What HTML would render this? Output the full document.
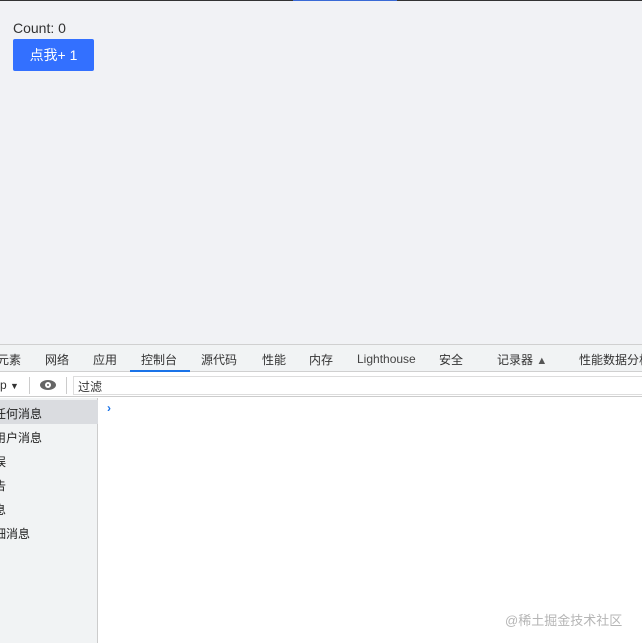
<!DOCTYPE html>
<html><head><meta charset="utf-8"><style>
*{margin:0;padding:0;box-sizing:border-box}
body{width:642px;height:643px;overflow:hidden;background:#f1f2f5;font-family:"Liberation Sans","Noto Sans CJK SC",sans-serif;position:relative}
.a{position:absolute}
.tab{position:absolute;top:351px;font-size:12px;color:#333;white-space:nowrap}
.side{position:absolute;left:0;font-size:12px;color:#222}
</style></head><body>
<div class="a" style="left:0;top:0;width:642px;height:1px;background:#333"></div>
<div class="a" style="left:293px;top:0;width:104px;height:1px;background:#3a6ad6"></div>
<div class="a" style="left:13px;top:20px;font-size:14px;color:#333">Count: 0</div>
<div class="a" style="left:13px;top:39px;width:81px;height:32px;background:#3370ff;border-radius:2px;color:#fff;font-size:14px;text-align:center;line-height:32px">点我+ 1</div>

<div class="a" style="left:0;top:344px;width:642px;height:299px;background:#fff"></div>
<div class="a" style="left:0;top:344px;width:642px;height:28px;background:#f1f3f4;border-top:1px solid #d0d0d0;border-bottom:1px solid #d0d0d0"></div>
<div class="tab" style="left:-3px">元素</div>
<div class="tab" style="left:45px">网络</div>
<div class="tab" style="left:93px">应用</div>
<div class="tab" style="left:141px">控制台</div>
<div class="a" style="left:130px;top:370px;width:60px;height:2px;background:#1a73e8"></div>
<div class="tab" style="left:201px">源代码</div>
<div class="tab" style="left:262px">性能</div>
<div class="tab" style="left:309px">内存</div>
<div class="tab" style="left:357px;top:352px;color:#444">Lighthouse</div>
<div class="tab" style="left:439px">安全</div>
<div class="tab" style="left:497px">记录器 <span style="font-size:11px;color:#555">▲</span></div>
<div class="tab" style="left:579px">性能数据分析</div>

<div class="a" style="left:0;top:373px;width:642px;height:24px;background:#fff;border-bottom:1px solid #ccc"></div>
<div class="a" style="left:0;top:378px;font-size:12px;color:#333">p <span style="font-size:9px">▼</span></div>
<div class="a" style="left:29px;top:377px;width:1px;height:17px;background:#ccc"></div>
<div class="a" style="left:40px;top:380px;width:16px;height:10px;border-radius:50%;background:#666"></div>
<div class="a" style="left:45px;top:382px;width:6px;height:6px;border-radius:50%;background:#fff"></div>
<div class="a" style="left:47px;top:384px;width:2px;height:2px;border-radius:50%;background:#666"></div>
<div class="a" style="left:66px;top:377px;width:1px;height:17px;background:#ccc"></div>
<div class="a" style="left:73px;top:376px;width:569px;height:19px;border:1px solid #ddd;border-right:none;background:#fff"></div>
<div class="a" style="left:78px;top:378px;font-size:12px;color:#333">过滤</div>

<div class="a" style="left:0;top:398px;width:98px;height:245px;background:#f1f3f4;border-right:1px solid #ccc"></div>
<div class="a" style="left:0;top:400px;width:98px;height:24px;background:#dadce0"></div>
<div class="side" style="left:-6px;top:405px">任何消息</div>
<div class="side" style="left:-6px;top:429px">用户消息</div>
<div class="side" style="left:-6px;top:453px">误</div>
<div class="side" style="left:-6px;top:477px">告</div>
<div class="side" style="left:-6px;top:501px">息</div>
<div class="side" style="left:-6px;top:525px">细消息</div>
<div class="a" style="left:107px;top:401px;font-size:12px;color:#1a73e8;font-weight:bold">›</div>
<div class="a" style="left:505px;top:610px;font-size:13px;color:#b5b5b5">@稀土掘金技术社区</div>
</body></html>
